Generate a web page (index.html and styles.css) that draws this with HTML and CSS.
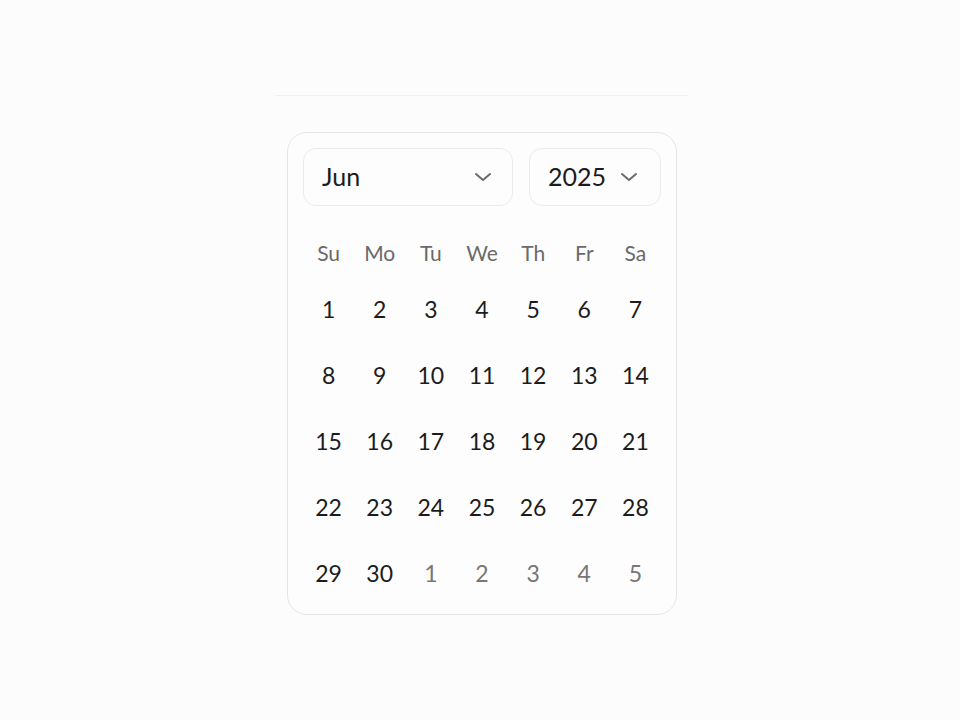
FILE: index.html
```html
<!DOCTYPE html>
<html>
<head>
<meta charset="utf-8">
<link rel="stylesheet" href="styles.css">
</head>
<body>
<div class="page">
  <div class="rule"></div>
  <div class="card">
    <div class="selects">
      <div class="select month">
        <span class="value">Jun</span>
        <svg class="chev" viewBox="0 0 18 10" width="18" height="10"><path d="M2 2 L9 8 L16 2" fill="none" stroke="#6b6b6b" stroke-width="2" stroke-linecap="round" stroke-linejoin="round"/></svg>
      </div>
      <div class="select year">
        <span class="value">2025</span>
        <svg class="chev" viewBox="0 0 18 10" width="18" height="10"><path d="M2 2 L9 8 L16 2" fill="none" stroke="#6b6b6b" stroke-width="2" stroke-linecap="round" stroke-linejoin="round"/></svg>
      </div>
    </div>
    <div class="weekdays">
      <span>Su</span><span>Mo</span><span>Tu</span><span>We</span><span>Th</span><span>Fr</span><span>Sa</span>
    </div>
    <div class="days">
      <span>1</span><span>2</span><span>3</span><span>4</span><span>5</span><span>6</span><span>7</span>
      <span>8</span><span>9</span><span>10</span><span>11</span><span>12</span><span>13</span><span>14</span>
      <span>15</span><span>16</span><span>17</span><span>18</span><span>19</span><span>20</span><span>21</span>
      <span>22</span><span>23</span><span>24</span><span>25</span><span>26</span><span>27</span><span>28</span>
      <span>29</span><span>30</span><span class="out">1</span><span class="out">2</span><span class="out">3</span><span class="out">4</span><span class="out">5</span>
    </div>
  </div>
</div>
</body>
</html>
```
FILE: styles.css
```css
html, body {
  margin: 0;
  padding: 0;
  background: #fcfcfc;
}
body {
  font-family: "Lato", "Open Sans", sans-serif;
  color: #1f1f1f;
}
.page {
  width: 960px;
  height: 720px;
  display: flex;
  flex-direction: column;
  align-items: center;
  padding-top: 95px;
  box-sizing: border-box;
}
.rule {
  width: 413px;
  height: 0;
  border-top: 1px solid #f1f1f1;
  margin-left: 2px;
}
.card {
  margin-top: 36px;
  margin-left: 4px;
  width: 390px;
  box-sizing: border-box;
  border: 1px solid #e6e6e6;
  border-radius: 20px;
  background: #fdfdfd;
  padding: 15px 15px 8px 15px;
}
.selects {
  display: flex;
  gap: 16px;
}
.select {
  height: 58px;
  box-sizing: border-box;
  border: 1px solid #ebebeb;
  border-radius: 13px;
  display: flex;
  align-items: center;
  justify-content: space-between;
  font-size: 25px;
  color: #1c1c1c;
}
.select .value {
  margin-top: -2px;
}
.month {
  width: 210px;
  padding: 0 20px 0 18px;
}
.year {
  width: 132px;
  padding: 0 22px 0 18px;
}
.chev {
  display: block;
}
.weekdays {
  margin-top: 26px;
  display: grid;
  grid-template-columns: repeat(7, 1fr);
  height: 40px;
  align-items: center;
  justify-items: center;
  font-size: 21px;
  color: #6a6a6a;
}
.days {
  margin-top: 4px;
  display: grid;
  grid-template-columns: repeat(7, 1fr);
  grid-auto-rows: 66px;
  align-items: center;
  justify-items: center;
  font-size: 23px;
  color: #1c1c1c;
}
.days .out {
  color: #777777;
}
```
